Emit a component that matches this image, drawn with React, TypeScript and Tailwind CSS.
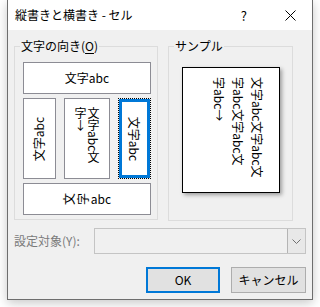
const font = "font-['Noto_Sans_CJK_JP','Noto_Sans',sans-serif]";

const OptionBox = ({ className, children }: { className: string; children?: React.ReactNode }) => (
  <div className={`border border-[#8c8c94] bg-white flex items-center justify-center ${className}`}>{children}</div>
);

// turned label that does not push on its box
const Turned = ({ cw }: { cw?: boolean }) => (
  <div className="w-[12px] flex justify-center">
    <span className={`inline-block whitespace-nowrap ${cw ? "rotate-90" : "-rotate-90"}`}>文字abc</span>
  </div>
);

const App = () => {
  return (
    <div className={`w-[320px] h-[307px] bg-white overflow-hidden text-[12px] text-black ${font}`}>
      <div className="ml-[7px] w-[306px] h-[300px] border border-t-0 border-[#6e6e6e] bg-[#f0f0f0] flex flex-col shadow-[0_3px_10px_rgba(0,0,0,0.22)]">
        {/* title bar */}
        <div className="h-[30px] bg-white flex items-center pl-[7px] shrink-0">
          <span className="text-[12px] leading-none">縦書きと横書き - セル</span>
          <span className="ml-auto mr-[38px] text-[13px] leading-none">?</span>
          <svg width="11" height="11" viewBox="0 0 11 11" className="mr-[16px]">
            <path d="M0.5 0.5 L10.5 10.5 M10.5 0.5 L0.5 10.5" stroke="#000" strokeWidth="1" />
          </svg>
        </div>

        <div className="flex px-[6px] mt-[16px] gap-[10px]">
          {/* orientation group */}
          <div className="relative w-[144px] h-[174px] border border-[#dcdcdc] px-[8px] pr-[6px] pt-[15px] flex flex-col gap-[4px]">
            <span className="absolute left-[5px] -top-[9px] bg-[#f0f0f0] px-px leading-[16px]">
              文字の向き(<span className="underline underline-offset-2">O</span>)
            </span>
            <OptionBox className="h-[32px]">文字abc</OptionBox>
            <div className="flex gap-[8px] h-[81px]">
              <OptionBox className="w-[33px] shrink-0">
                <Turned />
              </OptionBox>
              <div className="w-[46px] shrink-0 border border-[#8c8c94] bg-white flex justify-center pt-[8px]">
                <div className="[writing-mode:vertical-rl] leading-[13px] h-[62px]">
                  文字abc文字<span className="[text-orientation:upright]">↓</span>
                </div>
              </div>
              <div className="w-[33px] shrink-0 border border-dotted border-black flex">
                <div className="flex-1 border-[3px] border-[#0078d7] bg-white flex items-center justify-center">
                  <Turned cw />
                </div>
              </div>
            </div>
            <OptionBox className="h-[32px] gap-[2px]">
              <span className="inline-block -rotate-90 w-[12px] leading-[12px]">文</span>
              <span className="inline-block -rotate-90 w-[12px] leading-[12px]">字</span>
              <span>abc</span>
            </OptionBox>
          </div>

          {/* sample group */}
          <div className="relative w-[125px] h-[175px] border border-[#dcdcdc] pl-[13px] pt-[20px]">
            <span className="absolute left-[5px] -top-[9px] bg-[#f0f0f0] px-px leading-[16px]">サンプル</span>
            <div className="w-[98px] h-[126px] border border-black bg-white shadow-[2px_2px_4px_rgba(0,0,0,0.35)] flex justify-end pr-[12px] pt-[9px]">
              <div className="w-[57px] h-[104px]">
                <div className="w-[104px] leading-[19px] origin-top-left [transform:translateX(57px)_rotate(90deg)] whitespace-nowrap">
                  <div>文字abc文字abc文</div>
                  <div>字abc文字abc文</div>
                  <div>字abc→</div>
                </div>
              </div>
            </div>
          </div>
        </div>

        {/* target row */}
        <div className="flex items-center mt-[7px] px-[6px] text-[#7a7a7a]">
          <span className="w-[80px]">設定対象(Y):</span>
          <div className="flex-1 h-[26px] border border-[#c4c4c4] flex justify-end">
            <div className="w-[18px] h-full border-l border-[#b4b4b4] bg-[#e8e8e8] flex items-center justify-center">
              <svg width="9" height="5" viewBox="0 0 9 5">
                <path d="M0.5 0.5 L4.5 4.5 L8.5 0.5" stroke="#707070" fill="none" strokeWidth="1" />
              </svg>
            </div>
          </div>
        </div>

        {/* buttons */}
        <div className="flex justify-end gap-[11px] px-[6px] mt-[13px]">
          <button className="w-[74px] h-[26px] border-2 border-[#0078d7] bg-[#e1e1e1] text-[12px]">OK</button>
          <button className="w-[75px] h-[26px] border border-[#adadad] bg-[#e1e1e1] text-[12px]">キャンセル</button>
        </div>
      </div>
    </div>
  );
};

export default App;
